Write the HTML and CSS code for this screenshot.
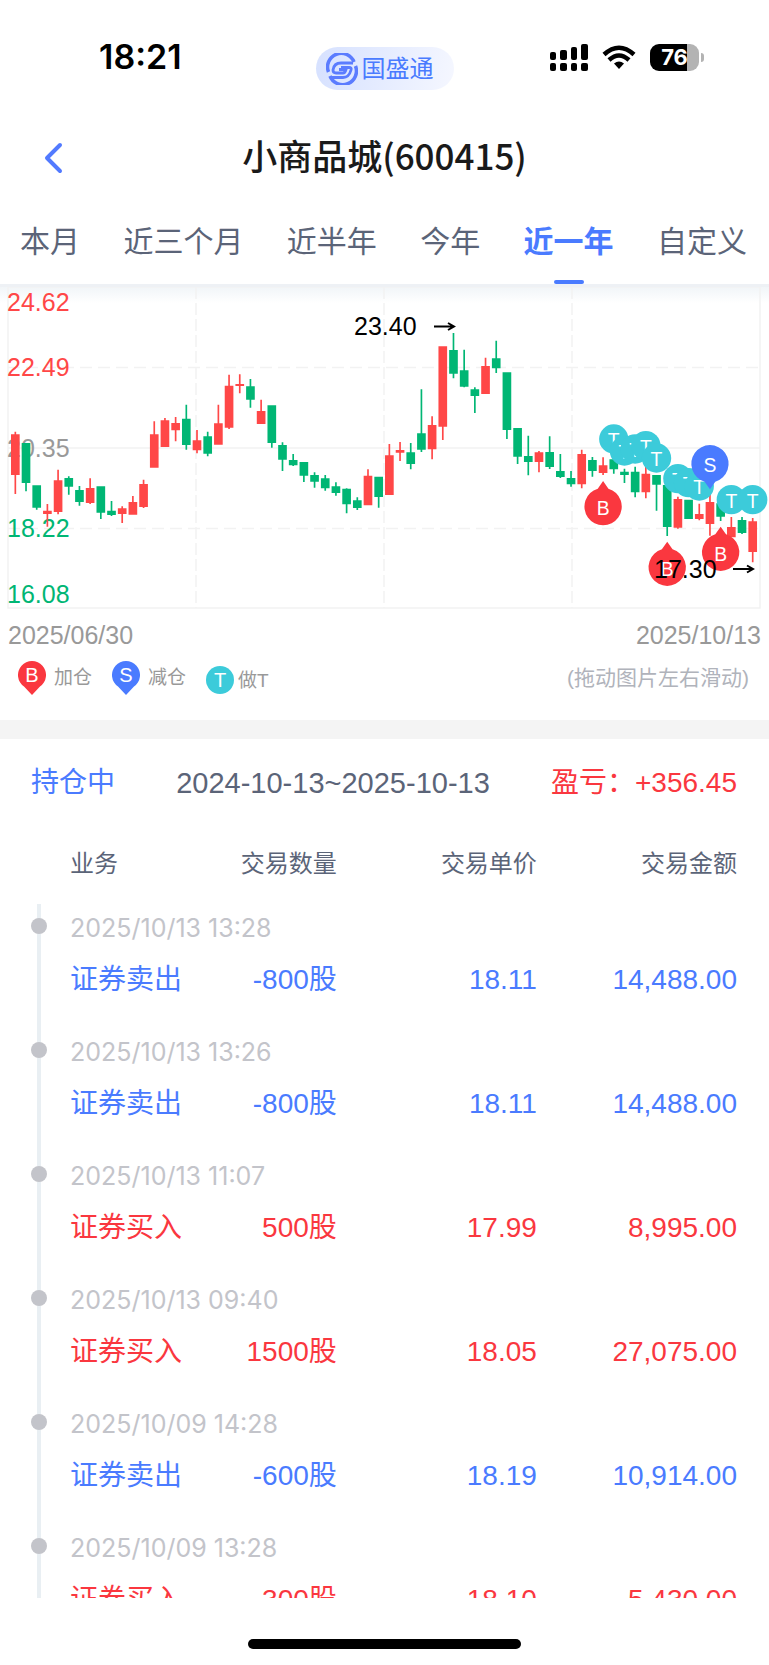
FILE: index.html
```html
<!DOCTYPE html>
<html lang="zh-CN">

<head>
    <meta charset="UTF-8">
    <meta name="viewport" content="width=device-width, initial-scale=1.0">
    <title>小商品城(600415)</title>
    <link rel="stylesheet" href="styles.css">
</head>

<body>
    <div class="page">
        <div class="status">
            <div class="time">18:21</div>
            <div class="logo">
                <svg width="32" height="32" viewBox="0 0 32 32" fill="none" stroke="#5b7cff">
                    <path d="M2.500 19A13.500 13.500 0 0 1 28 9" stroke-width="3.500" />
                    <path d="M29.500 13A13.500 13.500 0 0 1 4 23" stroke-width="3.500" />
                    <path d="M27 10H15Q8 10 7 17Q7 20 10 20H17Q19 20 20 16.500H13" stroke-width="2.800" />
                    <path d="M15 14.500H23Q26 14.500 25 17Q23 24.500 17 24.500H5" stroke-width="2.800" />
                </svg>
                <span>国盛通</span>
            </div>
            <div class="icons">
                <svg width="38" height="28" viewBox="0 0 38 28">
                    <rect x="0" y="8" width="6" height="8" rx="2" />
                    <rect x="10" y="6" width="7" height="10" rx="2" />
                    <rect x="21" y="3" width="6" height="13" rx="2" />
                    <rect x="31" y="0" width="7" height="16" rx="2" />
                    <rect x="0" y="19" width="6" height="8" rx="2" />
                    <rect x="10" y="19" width="7" height="8" rx="2" />
                    <rect x="21" y="19" width="6" height="8" rx="2" />
                    <rect x="31" y="19" width="7" height="8" rx="2" />
                </svg>
                <svg width="34" height="28" viewBox="0 0 34 28" fill="none" stroke="#000" stroke-width="4.500">
                    <path d="M2 10.500Q17 -3 32 10.500" />
                    <path d="M7 16Q17 7 27 16" />
                    <path d="M12 19.500Q17 15.500 22 19.500L17 25Z" fill="#000" stroke="none" />
                </svg>
                <div class="battery"><span>76</span></div>
            </div>
        </div>

        <div class="nav">
            <a class="back" href="#" aria-label="返回">
                <svg width="20" height="32" viewBox="0 0 20 32" fill="none" stroke="#527aff" stroke-width="4"
                    stroke-linecap="round" stroke-linejoin="round">
                    <path d="M17 3L4 16L17 29" />
                </svg>
            </a>
            <h1>小商品城(600415)</h1>
        </div>

        <div class="tabs">
            <button type="button">本月</button>
            <button type="button">近三个月</button>
            <button type="button">近半年</button>
            <button type="button">今年</button>
            <button type="button" class="active">近一年</button>
            <button type="button">自定义</button>
        </div>

        <div class="chart">
            <svg viewBox="0 7 769 325">
                <g class="grid">
                    <path d="M8 7H760V328H8Z M8 168H760" />
                    <path d="M8 87.500H760 M8 248.500H760" stroke-dasharray="12 6" />
                    <path d="M196 7V328 M384 7V328 M572 7V328" stroke-dasharray="12 4" />
                </g>
                <g class="price">
                    <text x="7" y="31" class="up">24.62</text>
                    <text x="7" y="96" class="up">22.49</text>
                    <text x="7" y="177">20.35</text>
                    <text x="7" y="257" class="down">18.22</text>
                    <text x="7" y="323" class="down">16.08</text>
                </g>
                <g id="nen"></g>
                <g id="diem"></g>
                <g class="price limit">
                    <text x="354" y="55">23.40</text>
                    <path d="M434 46.500H454 M448 43L454 46.500L448 50" />
                    <text x="654" y="298">17.30</text>
                    <path d="M733 289H753 M747 285.500L753 289L747 292.500" />
                </g>
            </svg>
        </div>
        <div class="dates">
            <span>2025/06/30</span>
            <span>2025/10/13</span>
        </div>
        <div class="legend">
            <svg width="28" height="34" viewBox="0 0 28 34">
                <path class="b" d="M14 34L6 25.500A14 14 0 1 1 22 25.500Z" />
                <text x="14" y="21">B</text>
            </svg>
            <span class="pin-name">加仓</span>
            <svg width="28" height="34" viewBox="0 0 28 34">
                <path class="s" d="M14 34L6 25.500A14 14 0 1 1 22 25.500Z" />
                <text x="14" y="21">S</text>
            </svg>
            <span class="pin-name">减仓</span>
            <svg width="28" height="34" viewBox="0 0 28 34">
                <circle class="t" cx="14" cy="19" r="14" />
                <text x="14" y="26">T</text>
            </svg>
            <span class="t-name">做T</span>
            <span class="hint">(拖动图片左右滑动)</span>
        </div>

        <div class="summary">
            <span class="holding">持仓中</span>
            <span class="period">2024-10-13~2025-10-13</span>
            <span class="profit">盈亏：+356.45</span>
        </div>

        <div class="records">
            <table>
                <thead>
                    <tr>
                        <th>业务</th>
                        <th>交易数量</th>
                        <th>交易单价</th>
                        <th>交易金额</th>
                    </tr>
                </thead>
                <tbody id="bang">
                </tbody>
            </table>
        </div>
        <div class="home"><span></span></div>
    </div>

    <script>
        // high, body top, body bottom, low, 1 = up (3 units = 1px)
        var nen = [
            [455, 463, 585, 642, 1], [489, 489, 609, 634, 0], [616, 616, 683, 689, 0], [672, 692, 702, 740, 1],
            [569, 601, 696, 703, 1], [589, 594, 620, 644, 0], [618, 630, 666, 677, 0], [595, 624, 669, 672, 1],
            [619, 619, 698, 717, 0], [663, 692, 705, 708, 0], [679, 685, 702, 729, 1], [648, 666, 704, 704, 1],
            [599, 612, 681, 684, 1], [424, 463, 563, 563, 1], [414, 421, 501, 501, 1], [411, 429, 451, 484, 1],
            [374, 416, 495, 509, 0], [450, 481, 511, 520, 1], [455, 469, 521, 529, 0], [374, 430, 494, 494, 1],
            [284, 317, 443, 447, 1], [283, 312, 318, 340, 1], [297, 319, 359, 383, 0], [359, 393, 432, 432, 1],
            [376, 376, 489, 503, 0], [487, 495, 539, 573, 0], [522, 540, 556, 558, 0], [546, 546, 587, 606, 0],
            [577, 585, 605, 623, 0], [585, 595, 625, 632, 0], [607, 619, 639, 647, 0], [625, 626, 673, 700, 0],
            [652, 661, 684, 690, 0], [568, 587, 676, 676, 1], [590, 590, 651, 683, 0], [492, 526, 645, 645, 1],
            [486, 510, 518, 543, 1], [489, 517, 552, 568, 0], [328, 460, 509, 516, 0], [409, 435, 508, 538, 1],
            [199, 199, 440, 480, 1], [159, 210, 281, 295, 0], [209, 271, 320, 322, 0], [322, 328, 348, 399, 0],
            [233, 258, 342, 342, 1], [182, 235, 265, 279, 0], [277, 277, 450, 477, 0], [444, 444, 530, 552, 0],
            [467, 528, 546, 586, 0], [513, 517, 546, 577, 1], [469, 516, 561, 567, 0], [522, 573, 591, 594, 0],
            [573, 594, 613, 620, 0], [509, 522, 613, 625, 1], [531, 540, 573, 590, 0], [532, 556, 579, 585, 1],
            [520, 538, 568, 581, 0], [566, 575, 585, 609, 0], [560, 575, 637, 652, 0], [560, 581, 637, 655, 1],
            [585, 585, 614, 692, 0], [615, 615, 741, 768, 0], [650, 657, 743, 746, 1], [659, 659, 717, 717, 0],
            [671, 702, 717, 721, 1], [640, 666, 732, 767, 1], [660, 670, 710, 723, 0], [711, 741, 772, 772, 1],
            [711, 720, 759, 762, 0], [714, 724, 816, 847, 1]
        ]

        // candle index, centre y, type
        var diem = [
            [55, 680, 'B'], [56, 477, 'T'], [57, 513, 'T'], [58, 507, 'T'], [59, 497, 'T'], [60, 534, 'T'],
            [61, 862, 'B'], [62, 596, 'T'], [63, 608, 'T'], [64, 618, 'T'], [65, 551, 'S'], [66, 817, 'B'],
            [67, 659, 'T'], [69, 659, 'T']
        ]

        var giaoDich = [
            ['2025/10/13 13:28', 'sell', '-800股', '18.11', '14,488.00'],
            ['2025/10/13 13:26', 'sell', '-800股', '18.11', '14,488.00'],
            ['2025/10/13 11:07', 'buy', '500股', '17.99', '8,995.00'],
            ['2025/10/13 09:40', 'buy', '1500股', '18.05', '27,075.00'],
            ['2025/10/09 14:28', 'sell', '-600股', '18.19', '10,914.00'],
            ['2025/10/09 13:28', 'buy', '300股', '18.10', '5,430.00']
        ]

        function viTriX(i) {
            return 46 + 32.06 * i;
        }

        function hienNen() {
            var hinh = '';
            for (let i = 0; i < nen.length; i++) {
                let [cao, tren, duoi, thap, tang] = nen[i];
                let x = viTriX(i);
                hinh += `<path class="${tang ? 'up' : 'down'}" d="M${x - 13} ${tren}h26V${duoi}h-26Z M${x - 2.5} ${cao}h5V${thap}h-5Z"/>`
            }
            return hinh;
        }

        function hienDiem() {
            var hinh = '';
            for (let [i, y, loai] of diem) {
                let dang = '<circle class="t" r="44"/>';
                if (loai == 'B')
                    dang = '<path class="b" d="M0 -77L-16 -54A56 56 0 1 0 16 -54Z"/>';
                if (loai == 'S')
                    dang = '<path class="s" d="M0 77L-16 54A56 56 0 1 1 16 54Z"/>';
                hinh += `<g transform="translate(${viTriX(i)} ${y})">${dang}<text y="${loai == 'T' ? 24 : 25}">${loai}</text></g>`
            }
            return hinh;
        }

        function hienGiaoDich() {
            var bang = '';
            for (let [ngay, loai, soLuong, gia, tien] of giaoDich) {
                bang += `<tr class="when"><td colspan="4">${ngay}</td></tr>
                    <tr class="${loai}">
                        <td>${loai == 'buy' ? '证券买入' : '证券卖出'}</td>
                        <td>${soLuong}</td>
                        <td>${gia}</td>
                        <td>${tien}</td>
                    </tr>`
            }
            return bang;
        }

        document.getElementById("nen").innerHTML = hienNen();
        document.getElementById("diem").innerHTML = hienDiem();
        document.getElementById("bang").innerHTML = hienGiaoDich();
    </script>
</body>

</html>
```
FILE: styles.css
```css
* {
    box-sizing: border-box;
}

body {
    margin: 0;
    background-color: #fff;
    color: #5b6478;
    font-family: "Liberation Sans", "Noto Sans CJK SC", sans-serif;
}

.page {
    display: flex;
    flex-direction: column;
    height: 100vh;
}

.status {
    display: grid;
    grid-template-columns: 1fr auto 1fr;
    align-items: start;
    height: 105px;
    padding-top: 40px;
}

.time {
    padding-left: 99px;
    color: #000;
    font: 600 34px/34px Inter, sans-serif;
}

.logo {
    display: flex;
    align-items: center;
    gap: 4px;
    height: 43px;
    margin-top: 7px;
    padding: 0 20px 0 10px;
    border-radius: 22px;
    background: linear-gradient(100deg, #d6e1ff, #f5f7ff);
    color: #4a7bff;
    font-size: 24px;
    line-height: 40px;
}

.icons {
    display: flex;
    justify-content: flex-end;
    gap: 14px;
    margin-top: 4px;
    padding-right: 70px;
}

.battery {
    position: relative;
    width: 49px;
    height: 27px;
    border-radius: 9px;
    background: linear-gradient(90deg, #000 76%, #b3b3b3 76%);
    color: #fff;
    font: 700 22px/27px Inter, sans-serif;
    text-align: center;
}

.battery::after {
    content: "";
    position: absolute;
    left: 51px;
    top: 9px;
    width: 3px;
    height: 9px;
    border-radius: 0 3px 3px 0;
    background-color: #b3b3b3;
}

.nav {
    display: grid;
    grid-template-columns: 60px 1fr 60px;
    align-items: center;
    height: 106px;
    padding: 0 43px;
}

.back svg {
    display: block;
}

h1 {
    margin: 0;
    padding-bottom: 6px;
    color: #1a1a1a;
    font: 500 35px/50px "Noto Sans CJK SC", sans-serif;
    text-align: center;
}

.tabs {
    display: flex;
    justify-content: space-between;
    height: 76px;
    padding: 0 22px 0 20px;
    border-bottom: 3px solid #eef1f5;
}

.tabs button {
    position: relative;
    padding: 0 0 12px;
    border: 0;
    background: none;
    color: #5b6478;
    font-family: inherit;
    font-size: 30px;
    line-height: 60px;
    cursor: pointer;
}

.tabs .active {
    color: #4a7bff;
    font-weight: 700;
}

.tabs .active::after {
    content: "";
    position: absolute;
    left: 50%;
    bottom: 0;
    width: 30px;
    height: 4px;
    margin-left: -15px;
    border-radius: 2px;
    background-color: #4a7bff;
}

.chart {
    background: linear-gradient(#f1f5f8, #fff 16px);
}

.chart svg {
    display: block;
    width: 100%;
}

.grid {
    fill: none;
    stroke: #f2f2f2;
    stroke-width: 1.5;
}

.price {
    fill: #999;
    font-size: 25px;
}

.limit {
    fill: #000;
}

.limit path {
    fill: none;
    stroke: #000;
    stroke-width: 2;
}

.up {
    fill: #ff4747;
}

.down {
    fill: #00b674;
}

#nen,
#diem {
    transform: scale(.33333);
}

#diem text {
    fill: #fff;
    font-size: 58px;
    text-anchor: middle;
}

.b {
    fill: #fa373f;
}

.s {
    fill: #4a7bff;
}

.t {
    fill: #3ccbda;
}

.dates {
    display: flex;
    justify-content: space-between;
    padding: 0 8px;
    color: #999;
    font-size: 25px;
    line-height: 46px;
}

.legend {
    display: flex;
    align-items: center;
    height: 62px;
    padding: 0 20px 22px 18px;
    color: #999;
    font-size: 19px;
    line-height: 30px;
}

.legend text {
    fill: #fff;
    font-size: 20px;
    text-anchor: middle;
}

.pin-name {
    margin: 0 20px 0 8px;
}

.t-name {
    margin: 5px 0 0 4px;
}

.hint {
    margin-left: auto;
    color: #b0b3bb;
    font-size: 21px;
}

.summary {
    display: flex;
    align-items: center;
    justify-content: space-between;
    height: 107px;
    padding: 0 32px 0 31px;
    border-top: 19px solid #f4f4f4;
    font-size: 28px;
    line-height: 40px;
}

.holding {
    color: #4a7bff;
}

.period {
    font-size: 29px;
}

.profit {
    color: #fa373f;
}

.records {
    position: relative;
    flex: 1;
    min-height: 0;
    overflow: hidden;
    padding: 0 32px 0 70px;
}

/* timeline */
.records::before {
    content: "";
    position: absolute;
    left: 37px;
    top: 77px;
    bottom: 0;
    width: 4px;
    background-color: #e9eff3;
}

table {
    width: 100%;
    table-layout: fixed;
    border-collapse: collapse;
}

th,
td {
    padding: 0;
    text-align: right;
    vertical-align: baseline;
    white-space: nowrap;
}

th {
    height: 77px;
    width: 30%;
    font-size: 24px;
    font-weight: 400;
    line-height: 74px;
}

th:nth-child(-n+2) {
    width: 20%;
}

th:first-child,
td:first-child {
    text-align: left;
}

td {
    height: 76px;
    font-size: 28px;
    line-height: 56px;
}

.when td {
    position: relative;
    height: 48px;
    color: #c3c4ca;
    font-family: Inter, sans-serif;
    font-size: 25px;
    line-height: 48px;
}

.when td::before {
    content: "";
    position: absolute;
    left: -39px;
    top: 14px;
    width: 16px;
    height: 16px;
    border-radius: 50%;
    background-color: #c3c4ca;
}

.sell {
    color: #4a7bff;
}

.buy {
    color: #fa373f;
}

.home {
    display: flex;
    justify-content: center;
    height: 67px;
    padding-top: 41px;
}

.home span {
    width: 273px;
    height: 10px;
    border-radius: 5px;
    background-color: #000;
}
```
